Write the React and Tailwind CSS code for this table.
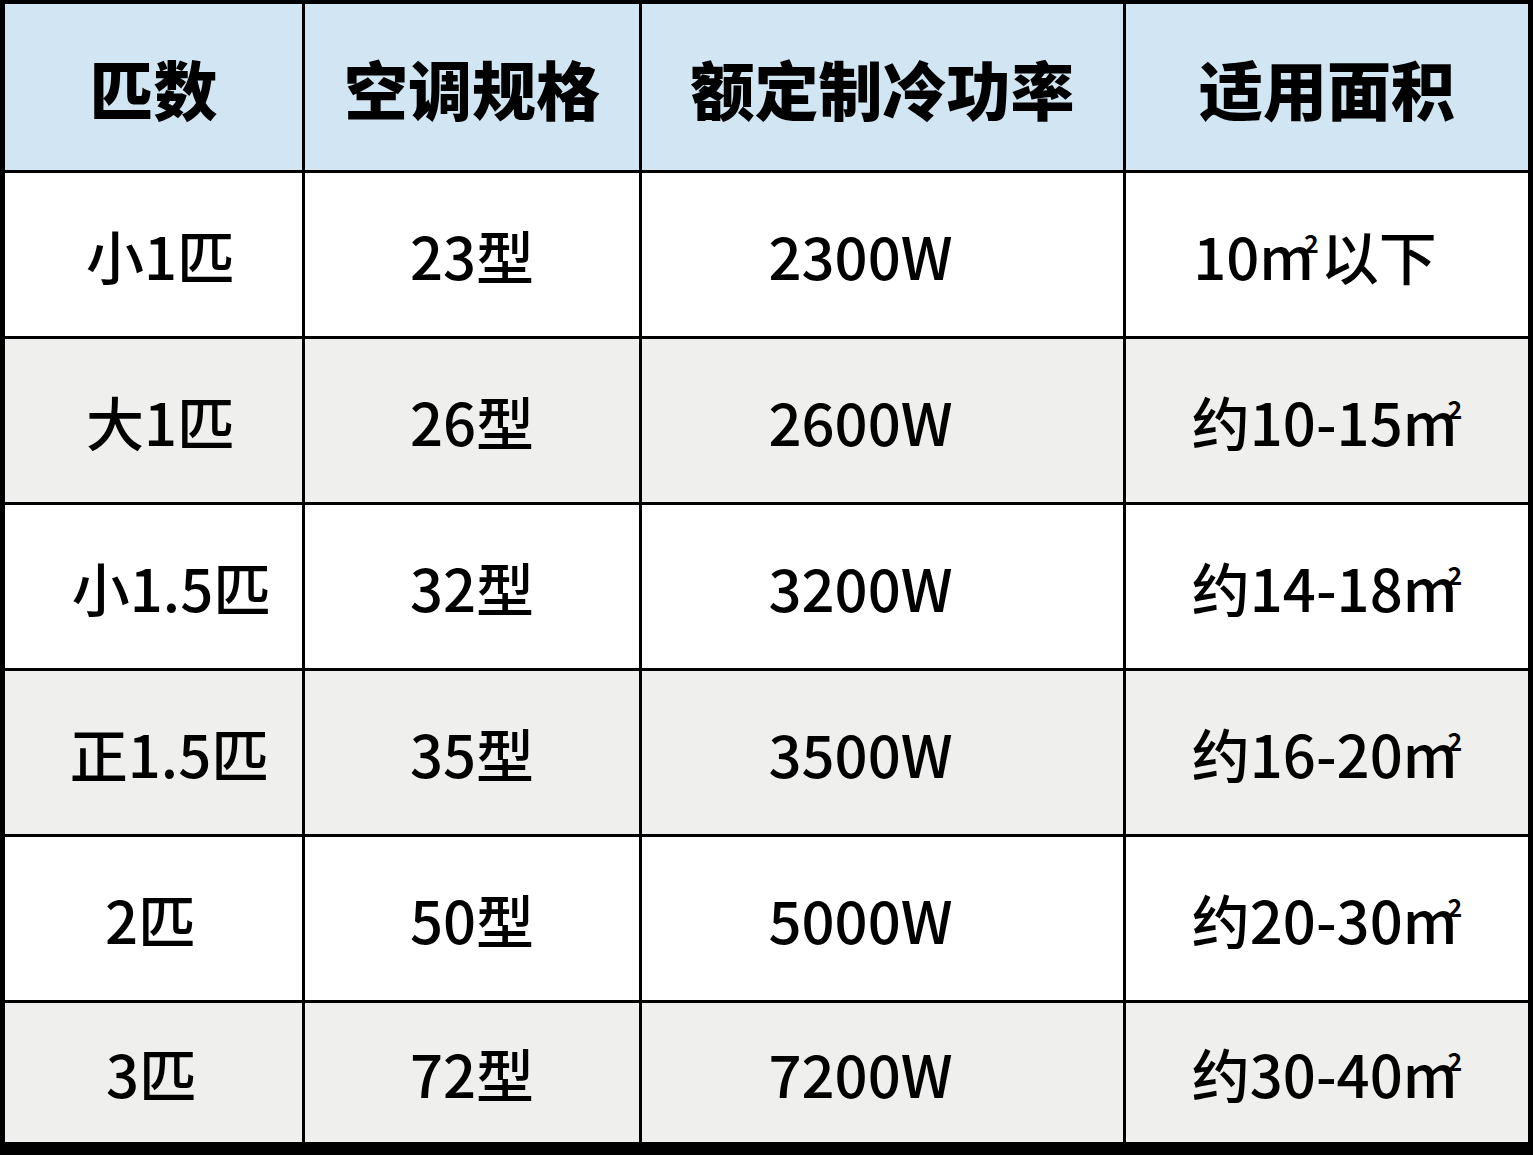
import React from 'react';

const headers = ['匹数', '空调规格', '额定制冷功率', '适用面积'];

// pad: nudges each first-column label the way the reference sits
const rows = [
  { name: '小1匹', pad: 'pl-[14px]', type: '23型', power: '2300W', area: ['10', '以下'], areaPad: 'pr-[24px]' },
  { name: '大1匹', pad: 'pl-[14px]', type: '26型', power: '2600W', area: ['约10-15', ''], areaPad: '' },
  { name: '小1.5匹', pad: 'pl-[36px]', type: '32型', power: '3200W', area: ['约14-18', ''], areaPad: '' },
  { name: '正1.5匹', pad: 'pl-[32px]', type: '35型', power: '3500W', area: ['约16-20', ''], areaPad: '' },
  { name: '2匹', pad: 'pr-[6px]', type: '50型', power: '5000W', area: ['约20-30', ''], areaPad: '' },
  { name: '3匹', pad: 'pr-[4px]', type: '72型', power: '7200W', area: ['约30-40', ''], areaPad: '' },
];

const font = { fontFamily: '"Noto Sans CJK SC", "Noto Sans", sans-serif' };

const Area = ({ before, after }) => (
  <span className="whitespace-nowrap">
    {before}m
    <span className="inline-block align-top text-[25px] leading-none font-bold -ml-[10px] translate-y-[4px]">2</span>
    {after && <span className="ml-[2px]">{after}</span>}
  </span>
);

const App = () => {
  return (
    <div className="w-[1533px] h-[1155px] bg-black pt-[4px] px-[5px] pb-[13px]" style={font}>
      <div className="grid grid-cols-[297px_334px_481px_402px] grid-rows-[166px_163px_163px_163px_163px_163px_139px] gap-[3px]">
        {headers.map((h) => (
          <div
            key={h}
            className="bg-[#d1e5f3] flex items-center justify-center text-[64px] font-black text-black leading-none"
          >
            {h}
          </div>
        ))}
        {rows.map((r, i) => {
          const bg = i % 2 === 0 ? 'bg-white' : 'bg-[#efefed]';
          return (
            <React.Fragment key={r.name}>
              <div className={`${bg} ${r.pad} flex items-center justify-center text-[58px] font-medium text-black leading-none`}>
                {r.name}
              </div>
              <div className={`${bg} flex items-center justify-center text-[58px] font-medium text-black leading-none`}>
                {r.type}
              </div>
              <div className={`${bg} flex items-center justify-center pr-[44px] text-[58px] font-medium text-black leading-none`}>
                {r.power}
              </div>
              <div className={`${bg} ${r.areaPad} flex items-center justify-center text-[58px] font-medium text-black leading-none`}>
                <Area before={r.area[0]} after={r.area[1]} />
              </div>
            </React.Fragment>
          );
        })}
      </div>
    </div>
  );
};

export default App;
